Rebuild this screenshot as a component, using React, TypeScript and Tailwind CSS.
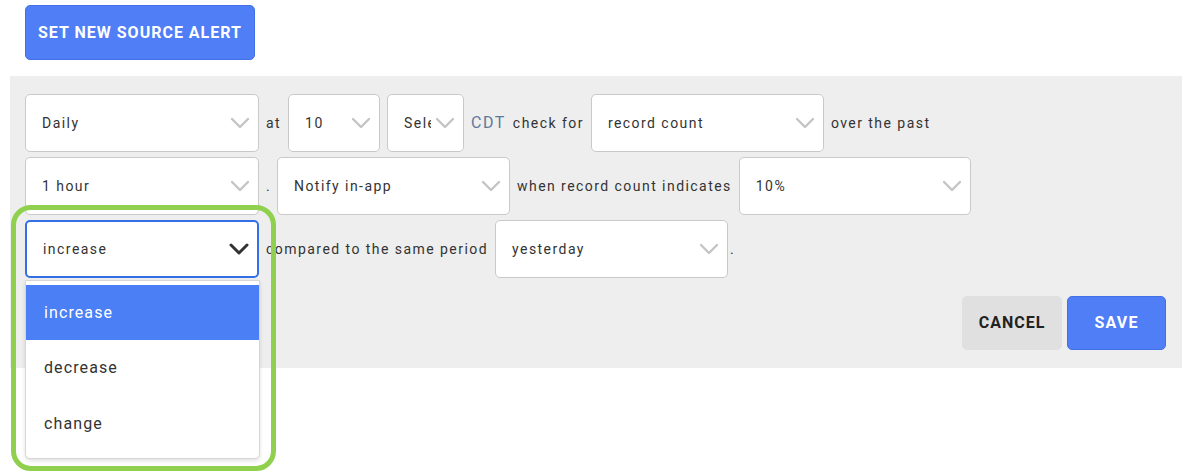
import { ReactNode } from "react";

function Chevron({ dark }: { dark?: boolean }) {
  return (
    <svg
      width="20"
      height="12"
      viewBox="0 0 20 12"
      fill="none"
      stroke={dark ? "#333333" : "#c4c4c4"}
      strokeWidth={dark ? 3 : 2.4}
      strokeLinecap="round"
      strokeLinejoin="round"
      className="shrink-0"
    >
      <polyline points="2 2 10 10 18 2" />
    </svg>
  );
}

function Select({
  width,
  value,
  focused,
  children,
}: {
  width: string;
  value: string;
  focused?: boolean;
  children?: ReactNode;
}) {
  return (
    <div className={`relative shrink-0 ${width}`}>
      <div
        className={`flex h-[58px] items-center justify-between gap-[4px] overflow-hidden rounded-[5px] bg-white pl-[16px] pr-[8px] ${
          focused ? "border-2 border-[#3370e6]" : "border border-[#c9c9c9]"
        }`}
      >
        <span className="min-w-0 overflow-hidden whitespace-nowrap text-[14px] tracking-[1.45px] text-[#333333]">
          {value}
        </span>
        <Chevron dark={focused} />
      </div>
      {children}
    </div>
  );
}

function Label({ children, className = "" }: { children: ReactNode; className?: string }) {
  return (
    <span className={`shrink-0 text-[14px] tracking-[1.45px] text-[#333333] ${className}`}>
      {children}
    </span>
  );
}

export default function App() {
  return (
    <div className="relative min-h-screen bg-white font-['Roboto',sans-serif]">
      <div className="pl-[25px] pt-[5px]">
        <button className="h-[55px] w-[230px] rounded-[5px] border border-[#4470e6] bg-[#4f7ef7] text-[16px] font-bold tracking-[1px] text-white">
          SET NEW SOURCE ALERT
        </button>
      </div>

      <div className="ml-[10px] mt-[16px] w-[1172px] bg-[#eeeeee] pb-[18px] pl-[15px] pr-[16px] pt-[18px]">
        <div className="flex flex-col gap-[5px]">
          <div className="flex items-center gap-[7px]">
            <Select width="w-[234px]" value="Daily" />
            <Label>at</Label>
            <Select width="w-[92px]" value="10" />
            <Select width="w-[77px]" value="Select" />
            <Label className="text-[#60799b]! text-[16px]! tracking-[1.5px]!">CDT</Label>
            <Label>check for</Label>
            <Select width="w-[233px]" value="record count" />
            <Label>over the past</Label>
          </div>
          <div className="flex items-center gap-[7px]">
            <Select width="w-[234px]" value="1 hour" />
            <Label className="w-[4px]">.</Label>
            <Select width="w-[233px]" value="Notify in-app" />
            <Label>when record count indicates</Label>
            <Select width="w-[232px]" value="10%" />
          </div>
          <div className="flex items-center gap-[7px]">
            <Select width="w-[234px]" value="increase" focused>
              <div className="absolute left-0 top-[calc(100%+2px)] z-10 w-[235px] rounded-b-[5px] border border-[#d6d6d6] bg-white pb-[6px] pt-[4px] shadow-[0_2px_4px_rgba(0,0,0,0.12)]">
                <div className="flex h-[55px] items-center bg-[#4a7ff6] pl-[18px] text-[16px] tracking-[1.1px] text-white">
                  increase
                </div>
                <div className="flex h-[56px] items-center pl-[18px] text-[16px] tracking-[1.1px] text-[#333333]">
                  decrease
                </div>
                <div className="flex h-[56px] items-center pl-[18px] text-[16px] tracking-[1.1px] text-[#333333]">
                  change
                </div>
              </div>
            </Select>
            <Label>compared to the same period</Label>
            <Select width="w-[233px]" value="yesterday" />
            <Label className="-ml-[5px]">.</Label>
          </div>
        </div>

        <div className="mt-[18px] flex justify-end gap-[5px]">
          <button className="h-[54px] w-[100px] rounded-[5px] bg-[#e0e0e0] text-[16px] font-bold tracking-[1px] text-[#222222]">
            CANCEL
          </button>
          <button className="h-[54px] w-[99px] rounded-[5px] border border-[#4470e6] bg-[#4f7ef7] text-[16px] font-bold tracking-[1.2px] text-white">
            SAVE
          </button>
        </div>
      </div>

      <div className="pointer-events-none absolute left-[11px] top-[205px] z-20 h-[266px] w-[265px] rounded-[20px] border-[5px] border-[#8fd14f]" />
    </div>
  );
}
